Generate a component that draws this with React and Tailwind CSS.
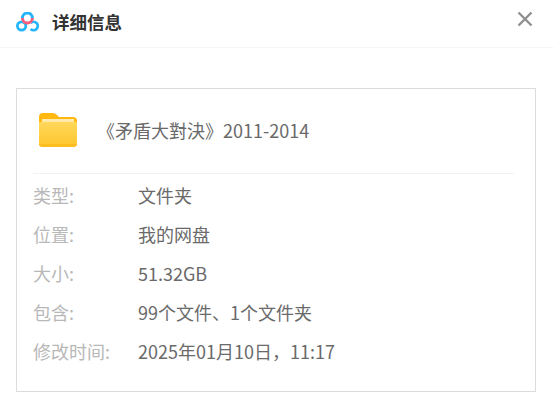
const FONT = "font-['Noto_Sans_CJK_SC','Noto_Sans',sans-serif]";

const rows = [
    { label: '类型:', value: '文件夹' },
    { label: '位置:', value: '我的网盘' },
    { label: '大小:', value: '51.32GB' },
    { label: '包含:', value: '99个文件、1个文件夹' },
    { label: '修改时间:', value: '2025年01月10日，11:17' },
];

const CloudLogo = () => (
    <svg width="24" height="20" viewBox="0 0 24 20" fill="none">
        <circle cx="5.6" cy="14" r="4.2" stroke="#25b6fa" strokeWidth="2.8" />
        <path d="M14.6 17 A4.2 4.2 0 1 0 14.6 11" stroke="#25b6fa" strokeWidth="2.8" />
        <path d="M6.4 6 A5 5 0 0 1 16.4 6" stroke="#25b6fa" strokeWidth="3" />
        <path d="M6.4 6 A5 5 0 0 0 16.4 6" stroke="#f7607c" strokeWidth="3" />
    </svg>
);

const FolderIcon = () => (
    <svg width="38" height="34" viewBox="0 0 38 34">
        <defs>
            <linearGradient id="folderBody" x1="0" y1="0" x2="0" y2="1">
                <stop offset="0" stopColor="#ffd75a" />
                <stop offset="1" stopColor="#ffc62e" />
            </linearGradient>
        </defs>
        <path d="M0 4 Q0 0 4 0 H14 Q16 0 17.5 1.5 L20 4 H34 Q38 4 38 8 V14 H0 Z" fill="#ffb80f" />
        <path d="M3 6 H35 V12 H3 Z" fill="#ffe9ab" />
        <path d="M0 9 H38 V30 Q38 34 34 34 H4 Q0 34 0 30 Z" fill="url(#folderBody)" />
        <path d="M0 31 H38 Q38 34 34 34 H4 Q0 34 0 31 Z" fill="#ffbd1f" />
    </svg>
);

const CloseIcon = () => (
    <svg width="16" height="16" viewBox="0 0 16 16" fill="none">
        <path d="M1.5 1.5 L14.5 14.5 M14.5 1.5 L1.5 14.5" stroke="#909090" strokeWidth="2.4" />
    </svg>
);

export default function App() {
    return (
        <div className={`w-[553px] h-[406px] bg-white overflow-hidden ${FONT}`}>
            <header className="h-12 flex justify-between border-b border-[#f4f4f4] pl-[16px] pr-[20px]">
                <div className="flex items-center gap-[12px] h-[44px]">
                    <CloudLogo />
                    <h1 className="text-[17.5px] font-bold text-[#333]">详细信息</h1>
                </div>
                <div className="pt-[11px]">
                    <CloseIcon />
                </div>
            </header>

            <main className="mx-[16px] mt-[40px] w-[520px] h-[304px] border border-[#dcdcdc] px-[16px]">
                <div className="h-[85px] flex items-center border-b border-[#f2f2f2] mr-[5px] pl-[6px] gap-[25px] pb-[2px]">
                    <FolderIcon />
                    <span className="text-[18px] leading-[24px] text-[#6a6a6a] -ml-[5px]">《矛盾大對決》2011-2014</span>
                </div>
                <div className="pt-[2px]">
                    {rows.map(r => (
                        <div key={r.label} className="h-[39px] flex items-center text-[18px]">
                            <span className="w-[105px] shrink-0 text-[#b8b8b8]">{r.label}</span>
                            <span className="text-[#6a6a6a]">{r.value}</span>
                        </div>
                    ))}
                </div>
            </main>
        </div>
    );
}
